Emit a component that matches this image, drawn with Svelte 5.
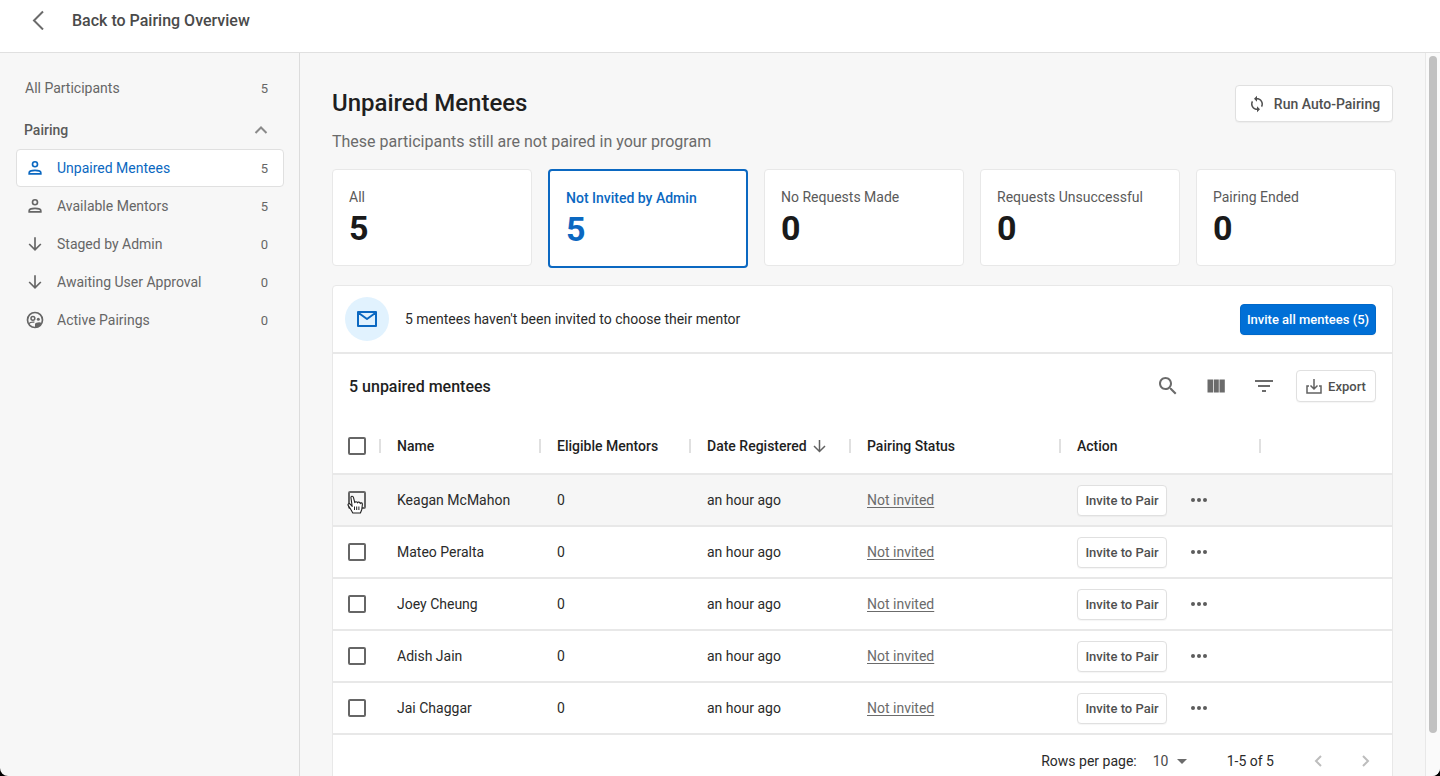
<script lang="ts">
	type NavIcon = 'person' | 'arrow' | 'pair';

	const navItems: { label: string; count: number; icon: NavIcon }[] = [
		{ label: 'Unpaired Mentees', count: 5, icon: 'person' },
		{ label: 'Available Mentors', count: 5, icon: 'person' },
		{ label: 'Staged by Admin', count: 0, icon: 'arrow' },
		{ label: 'Awaiting User Approval', count: 0, icon: 'arrow' },
		{ label: 'Active Pairings', count: 0, icon: 'pair' }
	];

	const stats = [
		{ label: 'All', value: 5 },
		{ label: 'Not Invited by Admin', value: 5 },
		{ label: 'No Requests Made', value: 0 },
		{ label: 'Requests Unsuccessful', value: 0 },
		{ label: 'Pairing Ended', value: 0 }
	];

	const mentees = ['Keagan McMahon', 'Mateo Peralta', 'Joey Cheung', 'Adish Jain', 'Jai Chaggar'];

	let activeNav = $state('Unpaired Mentees');
	let activeStat = $state('Not Invited by Admin');
	let pairingOpen = $state(true);
	let hovered = $state('Keagan McMahon');
	let selected = $state<string[]>([]);
	let pageSize = $state(10);

	const allSelected = $derived(selected.length === mentees.length);

	function toggleAll() {
		selected = allSelected ? [] : [...mentees];
	}
</script>

<div class="app">
	<header class="topbar">
		<button type="button" class="back">
			<svg width="14" height="20" viewBox="0 0 14 20" aria-hidden="true">
				<path d="M11 1.500 2 10.500l9 9" fill="none" stroke="currentColor" stroke-width="2" />
			</svg>
			Back to Pairing Overview
		</button>
	</header>

	<div class="body">
		<nav class="sidebar">
			<a class="nav-all" href="#all">
				<span>All Participants</span>
				<span class="count">5</span>
			</a>
			<button type="button" class="nav-group" aria-expanded={pairingOpen} onclick={() => (pairingOpen = !pairingOpen)}>
				<span>Pairing</span>
				<svg class:closed={!pairingOpen} width="14" height="8" viewBox="0 0 14 8" aria-hidden="true">
					<path d="M1.500 7 7 1.500 12.500 7" fill="none" stroke="#8a8a8a" stroke-width="2" />
				</svg>
			</button>
			{#if pairingOpen}
				{#each navItems as item (item.label)}
					<a
						class="nav-item"
						class:active={activeNav === item.label}
						href="#{item.icon}"
						onclick={() => (activeNav = item.label)}
					>
						<svg width="20" height="20" viewBox="0 0 24 24" aria-hidden="true">
							{#if item.icon === 'person'}
								<circle cx="12" cy="7.500" r="3" fill="none" stroke="currentColor" stroke-width="2" />
								<path d="M5 19v-1.200c0-1.900 3.800-3 7-3s7 1.100 7 3V19z" fill="none" stroke="currentColor" stroke-width="2" />
							{:else if item.icon === 'arrow'}
								<path d="M12 4v15M5 12l7 7 7-7" fill="none" stroke="currentColor" stroke-width="2" />
							{:else}
								<circle cx="12" cy="12" r="9" fill="none" stroke="currentColor" stroke-width="2" />
								<circle cx="9.500" cy="10" r="2.300" fill="none" stroke="currentColor" stroke-width="1.800" />
								<circle cx="16" cy="11" r="1.800" fill="currentColor" />
								<path d="M12 21v-4c0-2 6-3 8-1.500-1 3-4 5.500-8 5.500z" fill="currentColor" />
								<path d="M4.500 16.500c1.500-1.800 4-2.300 6.800-1.900" fill="none" stroke="currentColor" stroke-width="1.600" />
							{/if}
						</svg>
						<span class="label">{item.label}</span>
						<span class="count">{item.count}</span>
					</a>
				{/each}
			{/if}
		</nav>

		<main>
			<div class="page-head">
				<div>
					<h1>Unpaired Mentees</h1>
					<p>These participants still are not paired in your program</p>
				</div>
				<button type="button" class="btn run-btn">
					<svg width="18" height="18" viewBox="0 0 24 24" aria-hidden="true">
						<path d="M12 4V1L8 5l4 4V6c3.310 0 6 2.690 6 6 0 1.010-.25 1.970-.7 2.800l1.460 1.460C19.540 15.030 20 13.570 20 12c0-4.420-3.580-8-8-8zm0 14c-3.310 0-6-2.690-6-6 0-1.010.25-1.970.7-2.800L5.240 7.740C4.460 8.970 4 10.430 4 12c0 4.420 3.580 8 8 8v3l4-4-4-4v3z" fill="currentColor" />
					</svg>
					Run Auto-Pairing
				</button>
			</div>

			<div class="stats">
				{#each stats as stat (stat.label)}
					<button
						type="button"
						class="stat"
						class:active={activeStat === stat.label}
						aria-pressed={activeStat === stat.label}
						onclick={() => (activeStat = stat.label)}
					>
						<span>{stat.label}</span>
						<strong>{stat.value}</strong>
					</button>
				{/each}
			</div>

			<section class="panel">
				<div class="banner">
					<span class="mail">
						<svg width="22" height="18" viewBox="0 0 22 18" aria-hidden="true">
							<path d="M2 2h18v14H2zM2 2.500l9 6.500 9-6.500" fill="none" stroke="currentColor" stroke-width="2" stroke-linejoin="round" />
						</svg>
					</span>
					<p>5 mentees haven't been invited to choose their mentor</p>
					<button type="button" class="btn primary">Invite all mentees (5)</button>
				</div>

				<div class="toolbar">
					<h2>5 unpaired mentees</h2>
					<button type="button" class="icon-btn" aria-label="Search">
						<svg width="24" height="24" viewBox="0 0 24 24" aria-hidden="true">
							<path d="M15.500 14h-.79l-.28-.27C15.410 12.590 16 11.110 16 9.500 16 5.910 13.090 3 9.500 3S3 5.910 3 9.500 5.910 16 9.500 16c1.610 0 3.090-.59 4.230-1.570l.27.28v.79l5 4.990L20.490 19l-4.990-5zm-6 0C7.010 14 5 11.990 5 9.500S7.010 5 9.500 5 14 7.010 14 9.500 11.990 14 9.500 14z" fill="currentColor" />
						</svg>
					</button>
					<button type="button" class="icon-btn" aria-label="Columns">
						<svg width="24" height="24" viewBox="0 0 24 24" aria-hidden="true">
							<path d="M3.500 5.500H9v13H3.500zM9.700 5.500h5.100v13H9.700zM15.500 5.500h5.300v13h-5.300z" fill="currentColor" />
						</svg>
					</button>
					<button type="button" class="icon-btn" aria-label="Filter">
						<svg width="24" height="24" viewBox="0 0 24 24" aria-hidden="true">
							<path d="M10 18h4v-2h-4v2zM3 6v2h18V6H3zm3 7h12v-2H6v2z" fill="currentColor" />
						</svg>
					</button>
					<button type="button" class="btn export">
						<svg width="16" height="16" viewBox="0 0 16 16" aria-hidden="true">
							<path d="M3 8H1v7h14V8h-2M8 1v10M4.500 7.500 8 11l3.500-3.500" fill="none" stroke="#616161" stroke-width="1.500" />
						</svg>
						Export
					</button>
				</div>

				<table>
					<colgroup>
						<col class="c-check" />
						<col class="c-name" />
						<col class="c-mentors" />
						<col class="c-date" />
						<col class="c-status" />
						<col class="c-action" />
						<col />
					</colgroup>
					<thead>
						<tr>
							<th class="check">
								<div><input type="checkbox" aria-label="Select all" checked={allSelected} onchange={toggleAll} /></div>
							</th>
							<th><div>Name</div></th>
							<th><div>Eligible Mentors</div></th>
							<th>
								<div>
									Date Registered
									<svg class="sort" width="13" height="14" viewBox="0 0 13 14" aria-hidden="true">
										<path d="M6.500 1v11M1 7l5.500 5.500L12 7" fill="none" stroke="#616161" stroke-width="1.500" />
									</svg>
								</div>
							</th>
							<th><div>Pairing Status</div></th>
							<th><div>Action</div></th>
							<th></th>
						</tr>
					</thead>
					<tbody>
						{#each mentees as name, i (name)}
							<tr class:hovered={hovered === name} onmouseenter={() => (hovered = name)}>
								<td class="check">
									<input type="checkbox" aria-label="Select {name}" value={name} bind:group={selected} />
									{#if i === 0}
										<svg class="pointer" width="17" height="19" viewBox="0 0 17 19" aria-hidden="true">
											<path d="M5.200 11.500 3.200 9.200C2 8 .4 9.200 1.300 10.600L4 14.800l1.800 3.200h7.600l1.400-3.500.6-5.200c0-1.700-1.900-1.800-2.200-.7 0-1.800-2.300-2-2.700-.7-.3-1.500-2.300-1.500-2.700-.2L6.500 2.600C6 .6 3.600 1 4 3z" fill="#fff" stroke="#222" stroke-width="1.100" stroke-linejoin="round" />
											<path d="M7.500 11.500v3.500M9.700 11.500v3.500M11.900 11.500v3.500" stroke="#222" stroke-width="1" />
										</svg>
									{/if}
								</td>
								<td>{name}</td>
								<td>0</td>
								<td>an hour ago</td>
								<td><a class="status" href="#status">Not invited</a></td>
								<td>
									<div class="actions">
										<button type="button" class="btn invite">Invite to Pair</button>
										<button type="button" class="more" aria-label="More actions">
											<svg width="18" height="6" viewBox="0 0 18 6" aria-hidden="true">
												<g fill="#5c5c5c">
													<circle cx="3" cy="3" r="2" />
													<circle cx="9" cy="3" r="2" />
													<circle cx="15" cy="3" r="2" />
												</g>
											</svg>
										</button>
									</div>
								</td>
								<td></td>
							</tr>
						{/each}
					</tbody>
				</table>

				<footer class="pager">
					<label for="page-size">Rows per page:</label>
					<span class="size">
						<select id="page-size" bind:value={pageSize}>
							<option value={10}>10</option>
							<option value={25}>25</option>
							<option value={50}>50</option>
						</select>
						<svg width="10" height="5" viewBox="0 0 10 5" aria-hidden="true"><path d="M0 0h10L5 5z" fill="#6b6b6b" /></svg>
					</span>
					<span class="range">1-5 of 5</span>
					<button type="button" class="page-btn" aria-label="Previous page" disabled>
						<svg width="8" height="12" viewBox="0 0 8 12" aria-hidden="true">
							<path d="M7 1 2 6l5 5" fill="none" stroke="currentColor" stroke-width="2" />
						</svg>
					</button>
					<button type="button" class="page-btn" aria-label="Next page" disabled>
						<svg width="8" height="12" viewBox="0 0 8 12" aria-hidden="true">
							<path d="m1 1 5 5-5 5" fill="none" stroke="currentColor" stroke-width="2" />
						</svg>
					</button>
				</footer>
			</section>
		</main>

		<div class="scrollbar"><div class="thumb"></div></div>
	</div>
</div>

<style>
	:global(body) {
		background: #000;
	}

	.app {
		--blue: #0b68c1;
		--line: #e8e8e8;
		height: 100vh;
		display: flex;
		flex-direction: column;
		overflow: hidden;
		border-radius: 0 0 8px 8px;
		background: #f7f7f7;
		font-family: Roboto, sans-serif;
		font-size: 14px;
		color: #2a2a2a;
	}

	.app :global(*) {
		box-sizing: border-box;
	}

	button {
		font: inherit;
		color: inherit;
		cursor: pointer;
	}

	svg {
		display: block;
		flex: none;
	}

	h1,
	h2,
	p {
		margin: 0;
	}

	.topbar {
		flex: none;
		height: 53px;
		padding: 0 32px;
		background: #fff;
		border-bottom: 1px solid #e0e0e0;
	}

	.back {
		display: flex;
		align-items: center;
		gap: 26px;
		height: 40px;
		padding: 0;
		border: none;
		background: none;
		font-size: 16px;
		font-weight: 500;
		color: #4a4a4a;
	}

	.back svg {
		color: #6b6b6b;
	}

	.body {
		flex: 1;
		min-height: 0;
		display: flex;
	}

	.sidebar {
		flex: none;
		width: 300px;
		padding: 16px 15px 0 16px;
		border-right: 1px solid #dcdcdc;
		color: #666;
	}

	.sidebar a {
		color: inherit;
		text-decoration: none;
	}

	.nav-all,
	.nav-group {
		width: 100%;
		display: flex;
		align-items: center;
		justify-content: space-between;
		padding: 0 16px 0 8px;
		border: none;
		background: none;
	}

	.nav-all {
		height: 38px;
		padding-left: 9px;
	}

	.nav-group {
		height: 38px;
		margin-top: 4px;
		font-weight: 500;
		color: #5a5a5a;
	}

	.closed {
		transform: rotate(180deg);
	}

	.nav-item {
		display: flex;
		align-items: center;
		height: 38px;
		padding: 0 15px 0 8px;
		border: 1px solid transparent;
		border-radius: 4px;
	}

	.nav-item .label {
		flex: 1;
		margin-left: 12px;
	}

	.nav-item.active {
		background: #fff;
		border-color: #e0e0e0;
	}

	.nav-item.active svg,
	.nav-item.active .label {
		color: var(--blue);
	}

	.count {
		font-size: 13px;
	}

	main {
		flex: 1;
		min-width: 0;
		padding: 32px 32px 0;
		overflow: hidden;
	}

	.page-head {
		display: flex;
		justify-content: space-between;
		align-items: flex-start;
	}

	h1 {
		font-size: 24px;
		line-height: 36px;
		font-weight: 500;
		color: #1f1f1f;
	}

	.page-head p {
		margin-top: 8px;
		font-size: 16px;
		line-height: 26px;
		color: #6b6b6b;
	}

	.btn {
		display: flex;
		align-items: center;
		justify-content: center;
		padding: 0;
		border: 1px solid #e0e0e0;
		border-radius: 4px;
		background: #fff;
		font-weight: 500;
		color: #505050;
		box-shadow: 0 1px 1px rgba(0, 0, 0, 0.04);
	}

	.run-btn {
		width: 158px;
		height: 37px;
		gap: 8px;
	}

	.stats {
		display: flex;
		align-items: flex-start;
		gap: 16px;
		height: 100px;
		margin-top: 14px;
		margin-bottom: 16px;
	}

	.stat {
		flex: none;
		width: 200px;
		height: 97px;
		display: flex;
		flex-direction: column;
		align-items: flex-start;
		padding: 16px;
		border: 1px solid var(--line);
		border-radius: 4px;
		background: #fff;
		line-height: 22px;
		color: #5a5a5a;
	}

	.stat strong {
		font-size: 34px;
		line-height: 40px;
		font-weight: 700;
		color: #1a1a1a;
	}

	.stat.active {
		height: 99px;
		border: 2px solid var(--blue);
		font-weight: 500;
	}

	.stat.active,
	.stat.active strong {
		color: var(--blue);
	}

	.panel {
		border: 1px solid var(--line);
		border-radius: 4px;
		background: #fff;
	}

	.banner {
		display: flex;
		align-items: center;
		height: 68px;
		padding: 0 16px 0 12px;
		border-bottom: 2px solid var(--line);
	}

	.mail {
		width: 44px;
		height: 44px;
		display: flex;
		align-items: center;
		justify-content: center;
		border-radius: 50%;
		background: #e1f2fe;
		color: var(--blue);
	}

	.banner p {
		flex: 1;
		margin-left: 16px;
	}

	.primary {
		width: 136px;
		height: 31px;
		border-color: #0068c9;
		background: #006fd6;
		color: #fff;
	}

	.banner .primary,
	.export,
	.invite {
		font-size: 13px;
	}

	.toolbar {
		display: flex;
		align-items: center;
		height: 64px;
		padding: 0 16px;
	}

	h2 {
		flex: 1;
		font-size: 16px;
		font-weight: 500;
	}

	h2,
	th {
		color: #1f1f1f;
	}

	.icon-btn {
		width: 48px;
		height: 48px;
		display: flex;
		align-items: center;
		justify-content: center;
		padding: 0;
		border: none;
		background: none;
		color: #6b6b6b;
	}

	.export {
		width: 80px;
		height: 32px;
		gap: 6px;
		margin-left: 8px;
	}

	table {
		width: 100%;
		table-layout: fixed;
		border-collapse: separate;
		border-spacing: 0;
	}

	.c-check {
		width: 48px;
	}

	.c-name,
	.c-date {
		width: 160px;
	}

	.c-mentors {
		width: 150px;
	}

	.c-status {
		width: 210px;
	}

	.c-action {
		width: 200px;
	}

	th,
	td {
		padding: 0 0 0 16px;
		border-bottom: 2px solid var(--line);
		text-align: left;
	}

	th {
		height: 57px;
		font-weight: 500;
	}

	th div {
		display: flex;
		align-items: center;
	}

	/* short divider at the right edge of each header cell */
	th div::after {
		content: '';
		width: 2px;
		height: 14px;
		margin-left: auto;
		background: #e0e0e0;
	}

	td {
		height: 52px;
	}

	tr.hovered td {
		background: #f6f6f6;
	}

	.check {
		position: relative;
		padding-left: 15px;
	}

	.sort {
		margin-left: 6px;
	}

	input[type='checkbox'] {
		appearance: none;
		display: block;
		width: 18px;
		height: 18px;
		margin: 0;
		border: 2px solid #666;
		border-radius: 2px;
		background: transparent;
		cursor: pointer;
	}

	input[type='checkbox']:checked {
		border-color: var(--blue);
		background: var(--blue);
	}

	.pointer {
		position: absolute;
		left: 14px;
		top: 20px;
		pointer-events: none;
	}

	.status {
		color: #6b6b6b;
		text-underline-offset: 2px;
	}

	.actions {
		display: flex;
		align-items: center;
		gap: 16px;
	}

	.invite {
		width: 90px;
		height: 31px;
	}

	.more {
		width: 32px;
		height: 32px;
		display: flex;
		align-items: center;
		justify-content: center;
		padding: 0;
		border: none;
		background: none;
	}

	.pager {
		display: flex;
		align-items: center;
		justify-content: flex-end;
		height: 52px;
		padding-right: 2px;
	}

	.size {
		display: grid;
		align-items: center;
		width: 34px;
		margin-left: 16px;
	}

	.size select,
	.size svg {
		grid-area: 1 / 1;
	}

	.size svg {
		justify-self: end;
		pointer-events: none;
	}

	select {
		appearance: none;
		width: 100%;
		padding: 0;
		border: none;
		background: none;
		font: inherit;
		color: #4a4a4a;
	}

	.range {
		margin: 0 20px 0 40px;
	}

	.page-btn {
		width: 48px;
		height: 32px;
		display: flex;
		align-items: center;
		justify-content: center;
		padding: 0;
		border: none;
		background: none;
		color: #bdbdbd;
	}

	.scrollbar {
		flex: none;
		width: 15px;
		padding: 3px 3px 0;
		border-left: 1px solid #e8e8e8;
		background: #fafafa;
	}

	.thumb {
		height: 94%;
		border-radius: 4px;
		background: #c1c1c1;
	}
</style>
